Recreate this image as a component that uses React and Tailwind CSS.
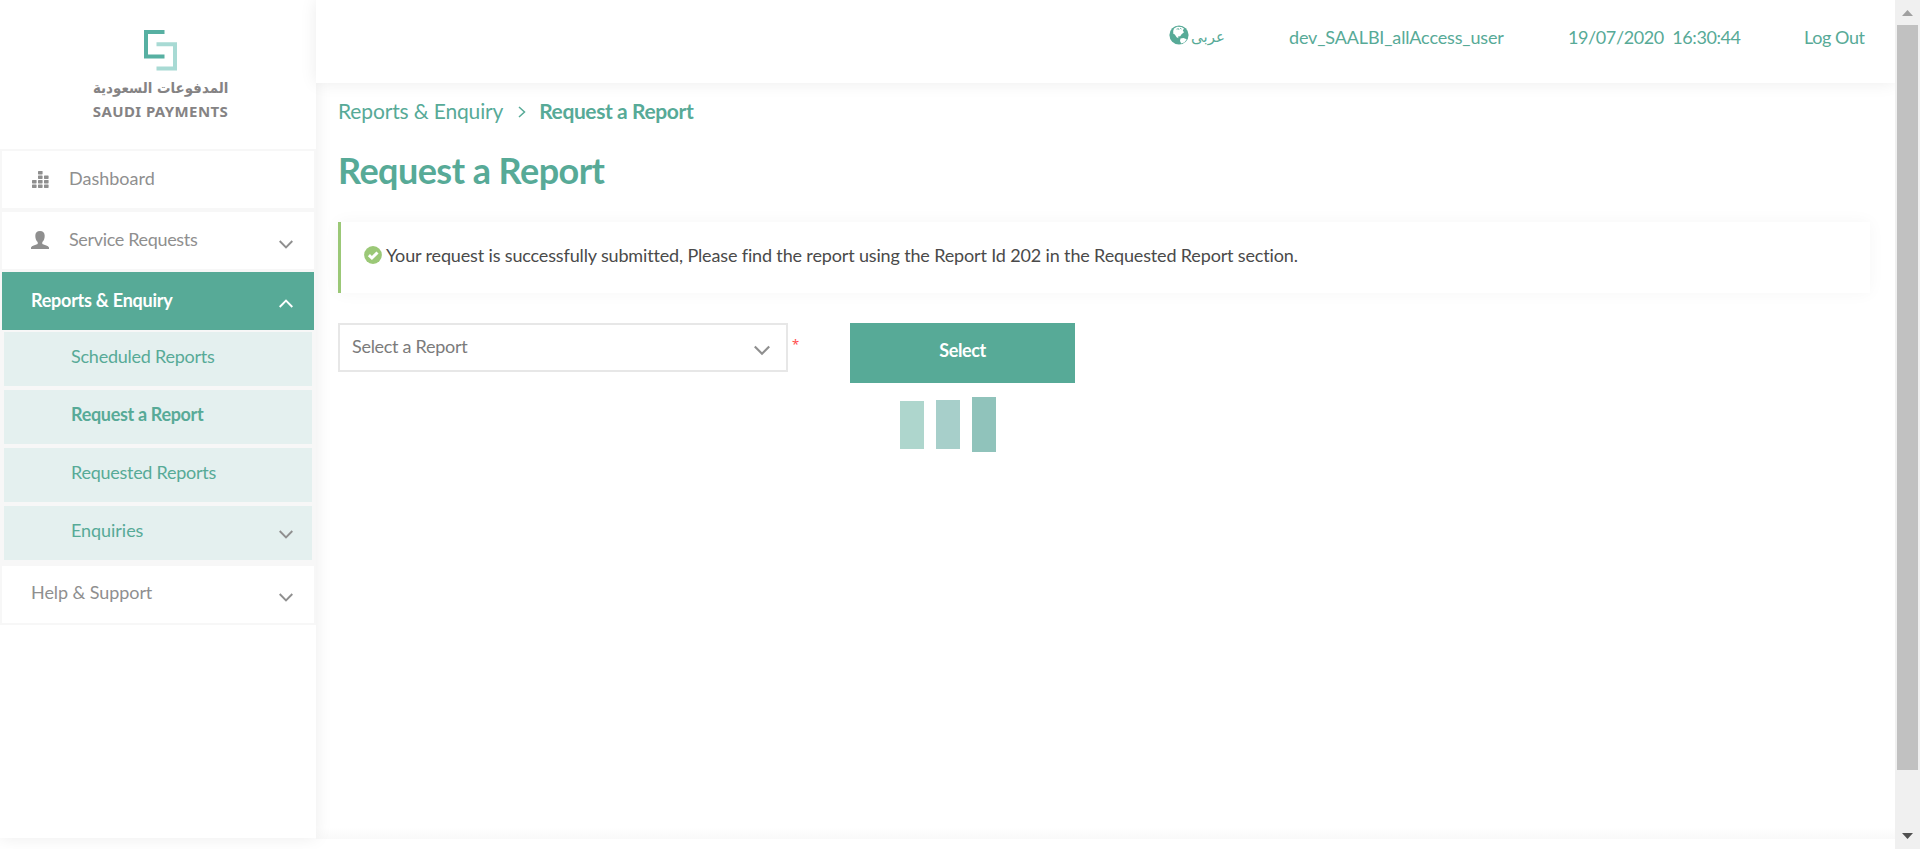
const F = "font-['Lato','Noto_Sans',sans-serif]";

function Chevron({ up, className }) {
  return (
    <svg viewBox="0 0 14 9" className={className} fill="none" stroke="currentColor" strokeWidth="1.9">
      <path d={up ? "M0.7 8 L7 1.6 L13.3 8" : "M0.7 1 L7 7.4 L13.3 1"} />
    </svg>
  );
}

function DashboardIcon() {
  const cells = [
    [0, 9], [0, 13.5],
    [6, 0], [6, 4.5], [6, 9], [6, 13.5],
    [12, 4.5], [12, 9], [12, 13.5],
  ];
  return (
    <svg viewBox="0 0 17 17" className="ml-[2px] h-[17px] w-[17px]" fill="currentColor">
      {cells.map(([x, y]) => (
        <rect key={`${x}-${y}`} x={x} y={y} width="4.6" height="3.4" rx="0.6" />
      ))}
    </svg>
  );
}

function PersonIcon() {
  return (
    <svg viewBox="0 0 18 18" className="h-[18px] w-[18px]" fill="currentColor">
      <path d="M9 0C6 0 4.300 1.900 4.300 4.800c0 2.800.9 5 2.400 6.300v1.900C4.300 14 0.700 14.800 0 16.400V18h18v-1.600c-.7-1.600-4.300-2.400-6.700-3.400v-1.900c1.500-1.300 2.400-3.500 2.400-6.300C13.700 1.900 12 0 9 0z" />
    </svg>
  );
}

function GlobeIcon() {
  return (
    <svg viewBox="0 0 20 20" className="h-[20px] w-[20px]">
      <circle cx="10" cy="10" r="9.6" fill="#57aa97" />
      <path d="M5 3.600 8 1.700 12.500 1.900 15 3.400 13.800 5.500 15 7.200 12.600 9.200 11.200 11.300 9 11.600 9.500 13.200 7.600 12.200 5.800 9.600 4.300 8.700 4.200 6z" fill="#fff" />
      <path d="M11.500 13.500 14.500 13 17.700 14.200 15.600 17.200 12.300 18.600 11 16z" fill="#fff" />
      <path d="M7.500 4.200 9.500 3.600 10 5M11 3.200 12.500 4" stroke="#57aa97" strokeWidth="0.8" fill="none" />
    </svg>
  );
}

function Logo() {
  return (
    <div className="flex h-[149px] flex-col items-center pt-[30px] pl-[5px]">
      <svg viewBox="0 0 33 41" className="h-[41px] w-[33px]" fill="none" strokeWidth="4">
        <path d="M20.500 2H2V26.500H20.500" stroke="#57b0a2" />
        <path d="M12.500 14.200H31V38.500H12.500" stroke="#a8dad4" />
      </svg>
      <div dir="rtl" className="mt-[7px] h-[21px] origin-center scale-x-[0.895] whitespace-nowrap font-['DejaVu_Sans',sans-serif] text-[15px] leading-[21px] font-bold text-[#858384]">
        المدفوعات السعودية
      </div>
      <div className="mt-[3px] h-[18px] whitespace-nowrap font-['Noto_Sans',sans-serif] text-[15px] leading-[18px] font-bold tracking-[0.4px] text-[#858384]">
        SAUDI PAYMENTS
      </div>
    </div>
  );
}

function SubItem({ label, bold, arrow, spacing }) {
  return (
    <div className="flex h-[54px] items-center justify-between bg-[#e4f0ef] pr-[19px] pl-[67px] text-[#57aa97]">
      <span className={`-mt-[5px] whitespace-nowrap ${bold ? "font-bold" : ""} ${spacing}`}>{label}</span>
      {arrow && <Chevron className="mt-[3px] h-[9px] w-[14px] text-[#8f8f8f]" />}
    </div>
  );
}

function Sidebar() {
  return (
    <aside className="relative h-[838px] w-[316px] shrink-0 bg-white text-[18px] text-[#8f8f8f] shadow-[0_0_16px_rgba(0,0,0,0.08)]">
      <Logo />
      <nav className="h-[476px] bg-[#f7f7f7] px-[2px] pt-[2px]">
        <div className="flex h-[57px] items-center bg-white pl-[28px]">
          <DashboardIcon />
          <span className="-mt-[3px] ml-[20px]">Dashboard</span>
        </div>
        <div className="mt-[4px] flex h-[57px] items-center bg-white pr-[21px] pl-[29px]">
          <div className="-mt-[2px]"><PersonIcon /></div>
          <span className="-mt-[3px] ml-[20px] tracking-[-0.34px]">Service Requests</span>
          <Chevron className="mt-[7px] ml-auto h-[9px] w-[14px]" />
        </div>
        <div className="mt-[3px] flex h-[58px] items-center justify-between bg-[#57aa97] pr-[21px] pl-[29px] font-bold text-white">
          <span className="-mt-[2px] tracking-[-0.25px]">Reports &amp; Enquiry</span>
          <Chevron up className="mt-[5px] h-[9px] w-[14px]" />
        </div>
        <div className="mx-[2px] mt-[2px] flex flex-col gap-[4px]">
          <SubItem label="Scheduled Reports" spacing="tracking-[-0.24px]" />
          <SubItem label="Request a Report" bold spacing="tracking-[-0.33px]" />
          <SubItem label="Requested Reports" spacing="tracking-[-0.27px]" />
          <SubItem label="Enquiries" arrow spacing="tracking-[-0.05px]" />
        </div>
        <div className="mt-[6px] flex h-[57px] items-center justify-between bg-white pr-[21px] pl-[29px]">
          <span className="-mt-[4px] tracking-[-0.08px]">Help &amp; Support</span>
          <Chevron className="mt-[6px] h-[9px] w-[14px]" />
        </div>
      </nav>
    </aside>
  );
}

function Header() {
  return (
    <header className="flex h-[83px] w-full bg-white pt-[23px] pl-[853px] text-[18px] leading-[28px] text-[#57aa97] shadow-[0_0_16px_rgba(0,0,0,0.08)]">
      <div className="flex w-[120px] shrink-0">
        <div className="mt-[2px]"><GlobeIcon /></div>
        <span dir="rtl" className="ml-[2px] font-['DejaVu_Sans',sans-serif] text-[15px]">عربى</span>
      </div>
      <span className="w-[279px] shrink-0 whitespace-nowrap tracking-[-0.15px]">dev_SAALBI_allAccess_user</span>
      <span className="w-[236px] shrink-0 whitespace-pre tracking-[-0.4px]">19/07/2020  16:30:44</span>
      <span className="whitespace-nowrap tracking-[-0.4px]">Log Out</span>
    </header>
  );
}

function Scrollbar() {
  return (
    <div className="relative flex h-[849px] w-[25px] shrink-0 flex-col items-center bg-[#f0f0f0]">
      <svg viewBox="0 0 11 6" className="mt-[10px] h-[6px] w-[11px]"><path d="M0 6 5.500 0 11 6z" fill="#a0a0a0" /></svg>
      <div className="mt-[9px] h-[745px] w-[21px] bg-[#c1c1c1]" />
      <svg viewBox="0 0 11 6" className="mt-[63px] h-[6px] w-[11px]"><path d="M0 0 5.500 6 11 0z" fill="#505050" /></svg>
    </div>
  );
}

export default function App() {
  return (
    <div className={`flex h-[849px] w-[1920px] overflow-hidden bg-white ${F}`}>
      <Sidebar />
      <main className="flex h-[839px] w-[1579px] shrink-0 flex-col bg-white">
        <div className="relative"><Header /></div>
        <div className="flex grow flex-col pr-[25px] pl-[22px] text-[#57aa97]">
          <div className="mt-[13px] flex h-[30px] items-center text-[21px]">
            <span className="tracking-[-0.15px]">Reports &amp; Enquiry</span>
            <svg viewBox="0 0 8 12" className="mt-[2px] mr-[13px] ml-[15px] h-[12px] w-[8px]" fill="none" stroke="currentColor" strokeWidth="1.500"><path d="M1 1 6.500 6 1 11" /></svg>
            <span className="font-bold tracking-[-0.4px]">Request a Report</span>
          </div>
          <h1 className="mt-[20px] h-[48px] text-[36px] leading-[48px] font-bold tracking-[-0.55px]">Request a Report</h1>
          <div className="mt-[28px] flex h-[71px] shrink-0 items-center border-l-[3px] border-[#9bc877] bg-white pl-[23px] text-[18px] text-[#4a4a4a] shadow-[0_0_16px_rgba(0,0,0,0.04)]">
            <svg viewBox="0 0 18 18" className="-mt-[5px] h-[18px] w-[18px]"><circle cx="9" cy="9" r="8.900" fill="#9bc877" /><path d="M4.900 9.200 7.900 12 13.500 6.500" fill="none" stroke="#fff" strokeWidth="3" /></svg>
            <span className="-mt-[5px] ml-[4px] whitespace-nowrap tracking-[-0.15px]">
              Your request is successfully submitted, Please find the report using the Report Id 202 in the Requested Report section.
            </span>
          </div>
          <div className="mt-[30px] flex items-start">
            <div className="flex h-[49px] w-[450px] items-center justify-between border-2 border-[#e7e7e7] bg-white pr-[16px] pl-[12px] text-[18px] text-[#7b7b7b]">
              <span className="-mt-[3px] tracking-[-0.29px]">Select a Report</span>
              <Chevron className="mt-[6px] h-[11px] w-[16px] text-[#8f8f8f]" />
            </div>
            <span className="mt-[11px] ml-[4px] w-[58px] font-['Noto_Sans',sans-serif] text-[13px] leading-[20px] text-[#ff4d4d]">*</span>
            <div>
              <div className="flex h-[60px] w-[225px] items-center justify-center bg-[#57aa97] pb-[5px] text-[18px] font-bold tracking-[-0.4px] text-white">Select</div>
              <div className="mt-[14px] flex gap-[12px] pl-[50px]">
                <div className="mt-[4px] h-[48px] w-[24px] bg-[#aed6cd]" />
                <div className="mt-[3px] h-[49px] w-[24px] bg-[#a7cfca]" />
                <div className="h-[55px] w-[24px] bg-[#90c3bb]" />
              </div>
            </div>
          </div>
        </div>
        <div className="h-[12px] w-full bg-linear-to-b from-white to-[#f9f9f9]" />
      </main>
      <Scrollbar />
    </div>
  );
}
